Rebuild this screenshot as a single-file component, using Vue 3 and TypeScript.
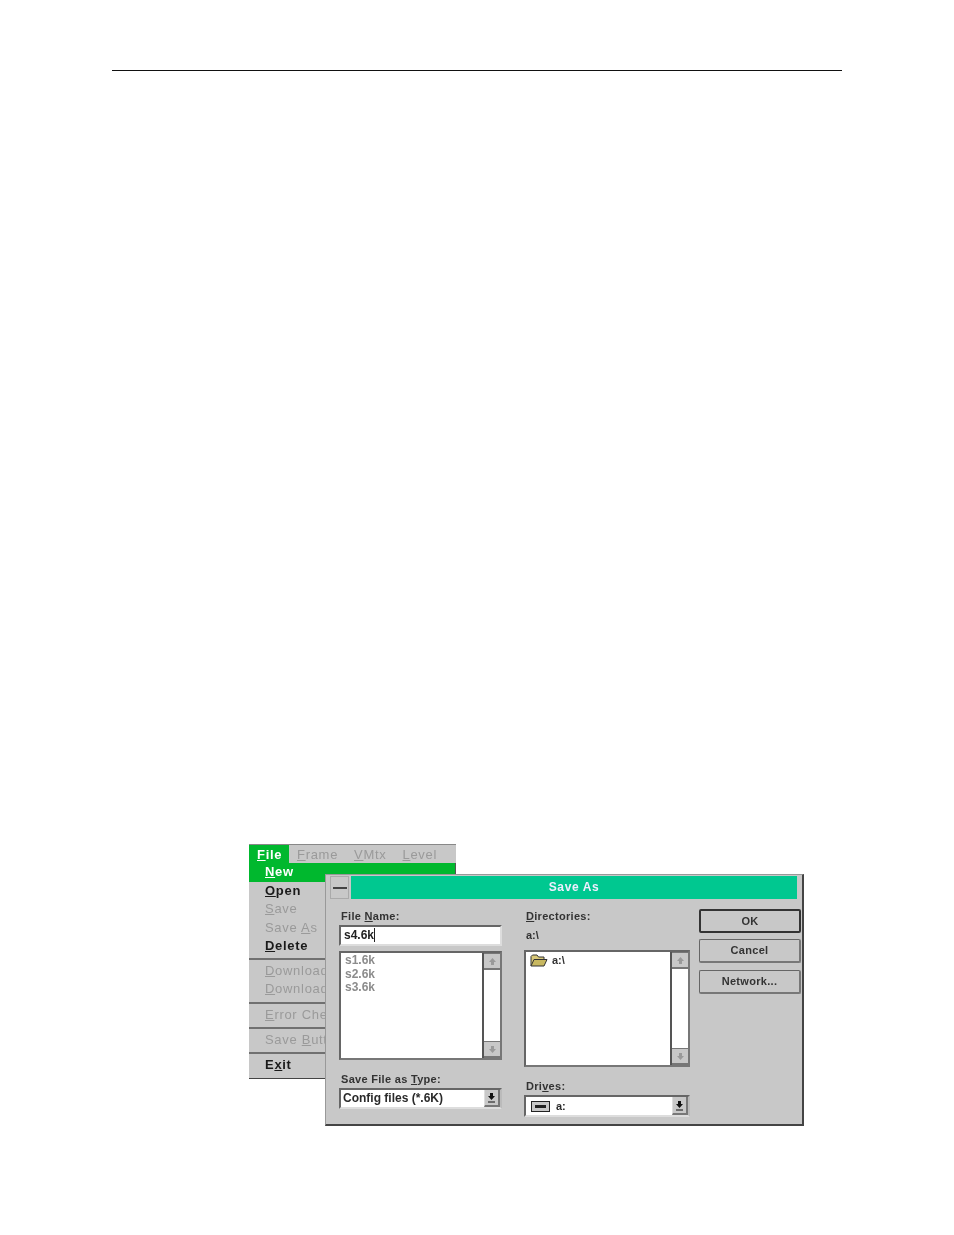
<script setup lang="ts">
interface MenuEntry { label: string; pre?: string; key?: string; post?: string; state: 'on' | 'off' | 'hot'; sep?: boolean }
const entries: MenuEntry[] = [
  { pre: '', key: 'N', post: 'ew', label: 'New', state: 'hot' },
  { pre: '', key: 'O', post: 'pen', label: 'Open', state: 'on' },
  { pre: '', key: 'S', post: 'ave', label: 'Save', state: 'off' },
  { pre: 'Save ', key: 'A', post: 's', label: 'Save As', state: 'off' },
  { pre: '', key: 'D', post: 'elete', label: 'Delete', state: 'on', sep: true },
  { pre: '', key: 'D', post: 'ownload', label: 'Download', state: 'off' },
  { pre: '', key: 'D', post: 'ownload', label: 'Download', state: 'off', sep: true },
  { pre: '', key: 'E', post: 'rror Check', label: 'Error Check', state: 'off', sep: true },
  { pre: 'Save ', key: 'B', post: 'utton', label: 'Save Button', state: 'off', sep: true },
  { pre: 'E', key: 'x', post: 'it', label: 'Exit', state: 'on' }
]
const files = ['s1.6k', 's2.6k', 's3.6k']
const buttons = ['OK', 'Cancel', 'Network...']
</script>

<template>
  <div class="page">
    <hr class="rule" />
    <div class="scene">
      <div class="menu">
        <div class="menubar">
          <span class="top top-hot"><u>F</u>ile</span>
          <span class="top"><u>F</u>rame</span>
          <span class="top"><u>V</u>Mtx</span>
          <span class="top"><u>L</u>evel</span>
        </div>
        <div class="entries">
          <template v-for="e in entries" :key="e.label + e.post">
            <div class="entry" :class="e.state">{{ e.pre }}<u>{{ e.key }}</u>{{ e.post }}</div>
            <div v-if="e.sep" class="sep"></div>
          </template>
        </div>
      </div>

      <div class="dialog">
        <div class="titlebar">
          <div class="sysbox"><span class="dash"></span></div>
          <div class="caption">Save As</div>
        </div>
        <div class="body">
          <div class="col col-a">
            <div class="label">File <u>N</u>ame:</div>
            <div class="input">s4.6k<span class="caret"></span></div>
            <div class="list list-a">
              <div class="items grey">
                <div v-for="f in files" :key="f">{{ f }}</div>
              </div>
              <div class="scroll">
                <div class="sbtn"><svg width="9" height="9" viewBox="0 0 9 9"><path d="M4.5 1 8 5H6v3H3V5H1z" fill="#9a9a9a" /></svg></div>
                <div class="strack"></div>
                <div class="sbtn"><svg width="9" height="9" viewBox="0 0 9 9"><path d="M4.5 8 8 4H6V1H3v3H1z" fill="#9a9a9a" /></svg></div>
              </div>
            </div>
            <div class="label label-low">Save File as <u>T</u>ype:</div>
            <div class="combo">
              <div class="combo-text">Config files (*.6K)</div>
              <div class="drop"><svg width="9" height="11" viewBox="0 0 9 11"><path d="M3 1h3v3h2L4.500 8 1 4h2zM1 9.500h7V10.500H1z" fill="#111" /></svg></div>
            </div>
          </div>

          <div class="col col-b">
            <div class="label"><u>D</u>irectories:</div>
            <div class="path">a:\</div>
            <div class="list list-b">
              <div class="items dir">
                <svg width="18" height="13" viewBox="0 0 18 13">
                  <path d="M1 12V2.500L2.500 1H7l1.500 2H14v2" fill="#d8c878" stroke="#333" />
                  <path d="M1 12 4 5.500h13L14 12z" fill="#c8b860" stroke="#333" />
                </svg>
                <span>a:\</span>
              </div>
              <div class="scroll">
                <div class="sbtn"><svg width="9" height="9" viewBox="0 0 9 9"><path d="M4.5 1 8 5H6v3H3V5H1z" fill="#9a9a9a" /></svg></div>
                <div class="strack"></div>
                <div class="sbtn"><svg width="9" height="9" viewBox="0 0 9 9"><path d="M4.5 8 8 4H6V1H3v3H1z" fill="#9a9a9a" /></svg></div>
              </div>
            </div>
            <div class="label label-low">Dri<u>v</u>es:</div>
            <div class="combo combo-b">
              <div class="combo-text drive">
                <svg width="19" height="11" viewBox="0 0 19 11">
                  <rect x="0.500" y="0.500" width="18" height="10" fill="#c8c8c8" stroke="#222" />
                  <rect x="4" y="4" width="11" height="3" fill="#222" />
                </svg>
                <span>a:</span>
              </div>
              <div class="drop"><svg width="9" height="11" viewBox="0 0 9 11"><path d="M3 1h3v3h2L4.500 8 1 4h2zM1 9.500h7V10.500H1z" fill="#111" /></svg></div>
            </div>
          </div>

          <div class="col col-c">
            <div v-for="(b, i) in buttons" :key="b" class="btn" :class="{ primary: i === 0 }">{{ b }}</div>
          </div>
        </div>
      </div>
    </div>
  </div>
</template>

<style scoped>
.page {
  width: 954px;
  min-height: 1235px;
  background: #fff;
  overflow: hidden;
  font-family: "Liberation Sans", Arial, sans-serif;
  color: #222;
}
.rule {
  margin: 70px 0 0 112px;
  width: 730px;
  height: 1px;
  border: 0;
  background: #111;
}
.scene {
  position: relative;
  margin: 773px 0 0 249px;
  width: 555px;
  height: 282px;
  filter: blur(0.45px);
}
u { text-underline-offset: 1px; }

.menu {
  width: 207px;
  height: 235px;
  background: #c8c8c8;
  border-bottom: 1px solid #444;
  box-sizing: border-box;
  font-size: 13px;
  letter-spacing: 0.7px;
}
.menubar {
  display: flex;
  height: 19px;
  color: #9a9a9a;
  border-top: 1px solid #888;
  box-sizing: border-box;
}
.top { padding: 1px 0 0; margin-right: 16px; line-height: 17px; }
.top-hot {
  background: #00b82e;
  color: #fff;
  font-weight: 700;
  width: 32px;
  padding-left: 8px;
  margin-right: 8px;
}
.entries { border-right: 1px solid #555; height: 215px; }
.entry {
  height: 18.3px;
  line-height: 18px;
  padding-left: 16px;
  white-space: nowrap;
  overflow: hidden;
}
.entry.hot { background: #00b82e; color: #fff; font-weight: 700; height: 19px; }
.entry.on { color: #1a1a1a; font-weight: 700; }
.entry.off { color: #9a9a9a; }
.sep {
  height: 2px;
  margin: 3px 0 2px;
  background: #707070;
}

.dialog {
  position: absolute;
  left: 76px;
  top: 30px;
  width: 479px;
  height: 252px;
  box-sizing: border-box;
  background: #c8c8c8;
  border: 1px solid #999;
  border-right: 2px solid #444;
  border-bottom: 2px solid #444;
  font-size: 12px;
}
.titlebar {
  display: flex;
  gap: 2px;
  height: 23px;
  margin: 1px 5px 0 4px;
}
.sysbox {
  width: 19px;
  display: flex;
  align-items: center;
  justify-content: center;
  background: #c8c8c8;
  border: 1px solid #aaa;
  box-sizing: border-box;
}
.dash { width: 14px; height: 2px; background: #444; }
.caption {
  flex: 1;
  background: #00c890;
  color: #eef;
  font-weight: 700;
  font-size: 12px;
  letter-spacing: 0.6px;
  text-align: center;
  line-height: 23px;
  padding-left: 0;
}
.body {
  display: grid;
  grid-template-columns: 163px 166px 89px;
  column-gap: 22px;
  padding: 10px 0 0 13px;
}
.col { display: flex; flex-direction: column; }
.col-c { margin-left: -13px; gap: 6px; }
.label {
  height: 14px;
  line-height: 14px;
  padding-left: 2px;
  font-weight: 700;
  font-size: 11px;
  letter-spacing: 0.3px;
  white-space: nowrap;
  color: #333;
}
.label-low { margin-top: 12px; }
.col-a .label-low { margin-top: 12px; }
.input {
  margin-top: 2px;
  height: 21px;
  box-sizing: border-box;
  border: 2px solid #666;
  border-right-color: #ddd;
  border-bottom-color: #ddd;
  background: #fff;
  font-weight: 700;
  font-size: 12px;
  line-height: 17px;
  padding-left: 3px;
  color: #222;
}
.caret {
  display: inline-block;
  width: 1px;
  height: 14px;
  margin-left: 0;
  vertical-align: -3px;
  background: #222;
}
.list {
  display: flex;
  box-sizing: border-box;
  background: #fff;
  border: 2px solid #666;
  border-right-color: #777;
  border-bottom-color: #777;
}
.list-a { margin-top: 5px; height: 109px; }
.path { height: 14px; margin-top: 5px; line-height: 14px; padding-left: 2px; font-size: 11px; font-weight: 700; color: #333; }
.list-b { margin-top: 8px; height: 117px; }
.items { flex: 1; padding: 1px 0 0 4px; font-size: 12px; line-height: 13.500px; }
.grey { color: #8c8c8c; font-weight: 700; }
.dir { display: flex; align-items: flex-start; gap: 4px; color: #333; font-weight: 700; padding-top: 2px; font-size: 11px; }
.scroll {
  width: 16px;
  display: flex;
  flex-direction: column;
  border-left: 2px solid #555;
}
.strack { flex: 1; background: #fff; }
.sbtn {
  height: 17px;
  display: flex;
  align-items: center;
  justify-content: center;
  background: #c8c8c8;
  border-top: 1px solid #777;
  border-bottom: 2px solid #777;
  box-sizing: border-box;
}
.combo {
  margin-top: 2px;
  height: 21px;
  display: flex;
  box-sizing: border-box;
  border: 2px solid #666;
  border-right-color: #bbb;
  border-bottom-color: #ddd;
  background: #fff;
}
.combo-b { height: 22px; }
.combo-text {
  flex: 1;
  font-weight: 700;
  font-size: 12px;
  line-height: 17px;
  padding-left: 2px;
  white-space: nowrap;
  color: #2a2a2a;
}
.drive { display: flex; align-items: center; gap: 6px; padding-left: 5px; font-size: 11px; }
.drop {
  width: 16px;
  display: flex;
  align-items: center;
  justify-content: center;
  background: #c8c8c8;
  border-right: 2px solid #777;
  border-bottom: 2px solid #777;
  border-left: 1px solid #ddd;
  box-sizing: border-box;
}
.btn {
  height: 24px;
  box-sizing: border-box;
  text-align: center;
  line-height: 21px;
  font-weight: 700;
  font-size: 11px;
  letter-spacing: 0.3px;
  color: #333;
  background: #c8c8c8;
  border: 1px solid #666;
  border-right: 2px solid #777;
  border-bottom: 2px solid #777;
  border-radius: 2px;
}
.btn:nth-child(3) { margin-top: 1px; }
.btn.primary { border: 2px solid #333; line-height: 20px; }
</style>
